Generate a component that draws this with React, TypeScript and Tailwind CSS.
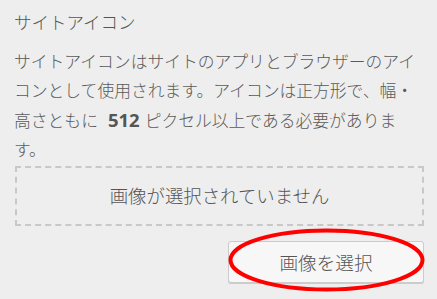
export default function App() {
  const jp = { fontFamily: '"Noto Sans CJK JP", "Noto Sans", sans-serif' };
  return (
    <div
      className="relative w-[437px] h-[299px] bg-[#eeeeee] overflow-hidden text-[#555555]"
      style={jp}
    >
      <div className="pl-[14px] pt-[10px] w-[423px] flex flex-col">
        <div className="text-[17.5px] leading-[24px] h-[24px] font-light">サイトアイコン</div>
        <p className="mt-[12.5px] text-[16.8px] leading-[29px] w-[409px] text-[#5a5a5a] font-light">
          サイトアイコンはサイトのアプリとブラウザーのアイコンとして使用されます。アイコンは正方形で、幅・高さともに
          <strong
            className="font-bold text-[18.5px] text-[#555555] ml-[10px] mr-[5px]"
            style={{ fontFamily: '"Open Sans", "Noto Sans", sans-serif' }}
          >
            512
          </strong>
          ピクセル以上である必要がありま
          <br />
          す。
        </p>
        <div className="mt-[2.5px] ml-[1px] w-[409px] h-[60px] border-2 border-dashed border-[#c8c8c8] flex items-center justify-center text-[18.4px] font-light">
          画像が選択されていません
        </div>
        <div className="flex justify-end mt-[15px] w-[410px]">
          <button className="w-[196px] h-[42px] bg-[#f7f7f7] border border-[#cccccc] rounded-[3px] shadow-[0_1px_0_#cccccc] text-[18.6px] text-[#555555] font-light flex items-center justify-center">
            画像を選択
          </button>
        </div>
      </div>
      <svg
        className="absolute left-0 top-0 pointer-events-none"
        width="437"
        height="299"
        viewBox="0 0 437 299"
      >
        <ellipse cx="326.5" cy="260" rx="96" ry="29.5" fill="none" stroke="#ff0000" strokeWidth="4" />
      </svg>
    </div>
  );
}
